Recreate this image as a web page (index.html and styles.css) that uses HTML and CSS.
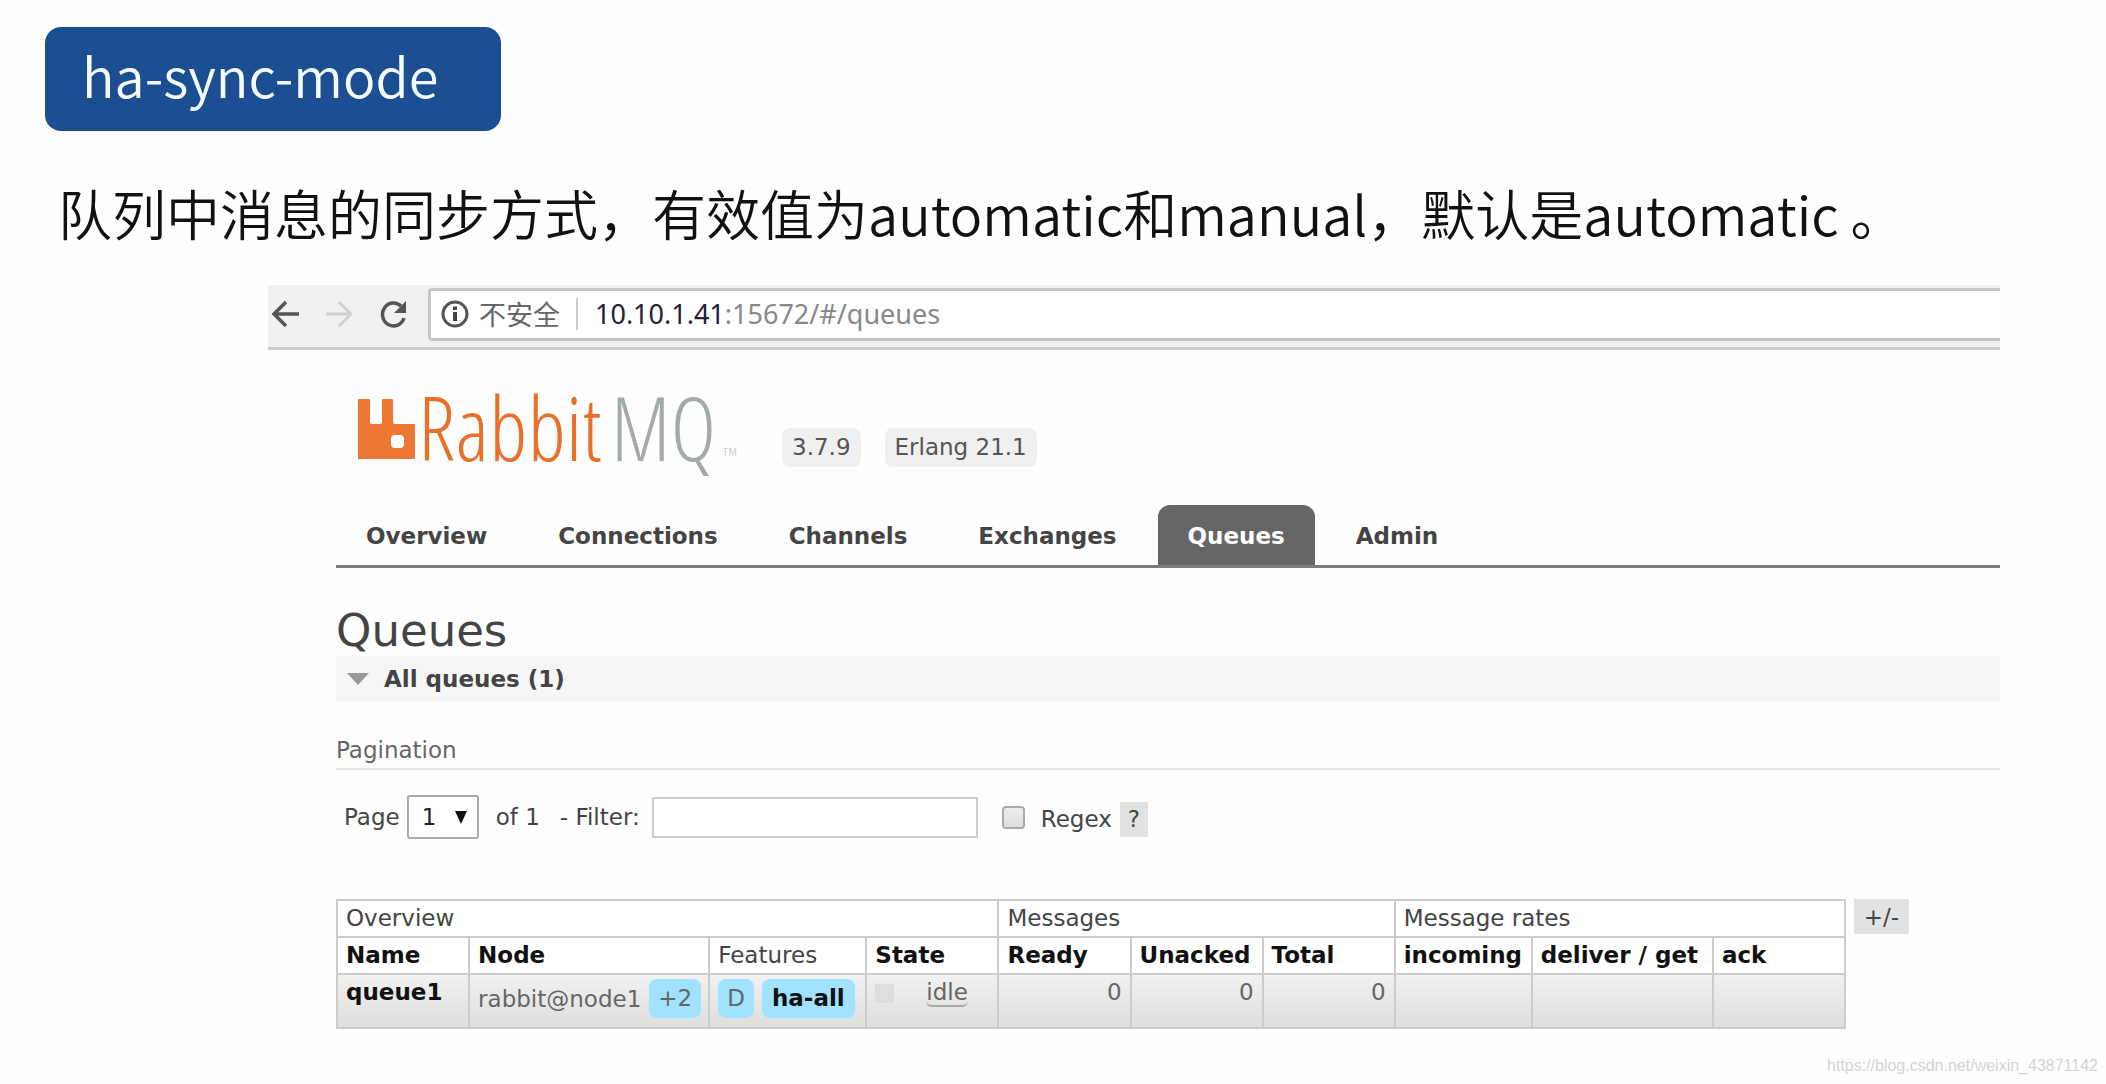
FILE: index.html
```html
<!DOCTYPE html>
<html lang="zh-CN">
<head>
<meta charset="utf-8">
<meta name="viewport" content="width=device-width, initial-scale=1">
<title>ha-sync-mode</title>
<link rel="stylesheet" href="styles.css">
</head>
<body>
<header class="intro">
  <h1 class="badge">ha-sync-mode</h1>
  <p class="lead">队列中消息的同步方式，有效值为automatic和manual，默认是automatic 。</p>
</header>

<div class="browser">
  <div class="toolbar">
    <div class="nav-buttons">
      <button class="nav-button" type="button" aria-label="Back">
        <svg width="28" height="28" viewBox="0 0 28 28" fill="none" stroke="#555" stroke-width="3.500"><path d="M28 14H3M15 2 3 14l12 12"/></svg>
      </button>
      <button class="nav-button" type="button" aria-label="Forward">
        <svg width="28" height="28" viewBox="0 0 28 28" fill="none" stroke="#d0d0d0" stroke-width="3"><path d="M1 14h24M14 2l12 12-12 12"/></svg>
      </button>
      <button class="nav-button" type="button" aria-label="Reload">
        <svg width="28" height="28" viewBox="0 0 28 28"><path d="M22 6A11 11.500 0 1 0 25 18" fill="none" stroke="#555" stroke-width="3.500"/><path d="M27 1v12H15z" fill="#555"/></svg>
      </button>
    </div>
    <div class="address">
      <svg width="28" height="28" viewBox="0 0 28 28"><circle cx="14" cy="14" r="12" fill="none" stroke="#555" stroke-width="3"/><path d="M12 12h4v9h-4zM12 6.500h4v3.500h-4z" fill="#444"/></svg>
      <span class="insecure">不安全</span>
      <span class="url"><b>10.10.1.41</b>:15672/#/queues</span>
    </div>
  </div>

  <main class="page">
    <div class="brand">
      <a class="logo" href="#/" aria-label="RabbitMQ">
        <svg width="58" height="62" viewBox="0 0 58 62"><path fill="#ed7734" fill-rule="evenodd" d="M1 1h11q1 0 1 1v22q0 2 2 2h8q2 0 2-2V2q0-1 1-1h9q1 0 1 1v22q0 2 2 2h19q1 0 1 1v33q0 1-1 1H1zM38 37q-4 0-4 4v5q0 4 4 4h5q4 0 4-4v-5q0-4-4-4z"/></svg>
        <span class="wordmark"><span class="rabbit">Rabbit</span><span class="mq">MQ</span></span>
        <span class="tm">TM</span>
      </a>
      <span class="version">3.7.9</span>
      <span class="version">Erlang 21.1</span>
    </div>

    <nav class="tabs">
      <a class="tab" href="#/">Overview</a>
      <a class="tab" href="#/connections">Connections</a>
      <a class="tab" href="#/channels">Channels</a>
      <a class="tab" href="#/exchanges">Exchanges</a>
      <a class="tab tab-selected" href="#/queues" aria-current="page">Queues</a>
      <a class="tab" href="#/users">Admin</a>
    </nav>

    <h2 class="title">Queues</h2>
    <button class="section" type="button" aria-expanded="true"><span class="caret"></span>All queues (1)</button>
    <h3 class="subtitle">Pagination</h3>

    <form class="filters">
      <label for="page">Page</label>
      <span class="select-box">
        <select id="page"><option>1</option></select>
        <svg class="select-arrow" width="12" height="14" viewBox="0 0 12 14"><path d="M0 1h12L6 14z" fill="#111"/></svg>
      </span>
      <span class="of">of 1</span>
      <label class="filter-label" for="filter">- Filter:</label>
      <input class="filter" id="filter" type="text">
      <input class="tick" id="regex" type="checkbox">
      <label class="regex-label" for="regex">Regex</label>
      <button class="help" type="button">?</button>
    </form>

    <div class="list">
      <table class="queues">
        <colgroup>
          <col class="c-name"><col class="c-node"><col class="c-features"><col class="c-state">
          <col class="c-num"><col class="c-num"><col class="c-num">
          <col class="c-incoming"><col class="c-deliver"><col class="c-num">
        </colgroup>
        <thead>
          <tr><th class="plain" colspan="4">Overview</th><th class="plain" colspan="3">Messages</th><th class="plain" colspan="3">Message rates</th></tr>
          <tr><th>Name</th><th>Node</th><th class="plain">Features</th><th>State</th><th>Ready</th><th>Unacked</th><th>Total</th><th>incoming</th><th>deliver / get</th><th>ack</th></tr>
        </thead>
        <tbody>
          <tr>
            <td><a class="queue-link" href="#/queues/queue1">queue1</a></td>
            <td><div class="tags">rabbit@node1 <span class="tag">+2</span></div></td>
            <td><div class="tags"><span class="tag">D</span><a class="tag tag-policy" href="#/policies/ha-all">ha-all</a></div></td>
            <td><div class="state"><span class="dot"></span><span class="idle">idle</span></div></td>
            <td class="num">0</td><td class="num">0</td><td class="num">0</td>
            <td></td><td></td><td></td>
          </tr>
        </tbody>
      </table>
      <button class="columns" type="button">+/-</button>
    </div>
  </main>
</div>

<footer class="watermark">https://blog.csdn.net/weixin_43871142</footer>
</body>
</html>
```
FILE: styles.css
```css
* { box-sizing: border-box; }

body {
  margin: 0;
  background: #fefefe;
  color: #444;
  font: 23px/26px "DejaVu Sans", Verdana, sans-serif;
}

button, input, select { font: inherit; color: inherit; margin: 0; }
button { border: 0; padding: 0; background: none; }
a { color: inherit; text-decoration: none; }
svg { display: block; flex: none; }
h1, h2, h3, p { margin: 0; font-weight: normal; }

/* Slide heading */
.intro {
  padding: 27px 45px 0;
  font-family: "Noto Sans CJK SC", sans-serif;
}
.badge {
  width: 456px;
  height: 104px;
  padding-left: 37px;
  border-radius: 16px;
  background: #1b4f91;
  color: #f4fbff;
  font-size: 54px;
  font-weight: 350;
  line-height: 96px;
}
.lead {
  margin-top: 42px;
  padding-left: 13px;
  color: #111;
  font-size: 54px;
  font-weight: 350;
  line-height: 80px;
}

/* Browser window */
.browser { margin: 32px 106px 0 268px; }
.toolbar {
  display: flex;
  height: 65px;
  border-bottom: 3px solid #ccc;
  background: #f1f1f1;
}
.nav-buttons {
  display: flex;
  align-items: center;
  gap: 26px;
  width: 160px;
  padding: 0 0 4px 3px;
}
.nav-button { width: 28px; height: 28px; }
.address {
  display: flex;
  flex: 1;
  align-items: center;
  height: 53px;
  margin-top: 3px;
  padding: 0 0 2px 10px;
  border: 3px solid #c6c6c6;
  border-right: 0;
  border-radius: 4px 0 0 4px;
  background: #fff;
  color: #888;
  font: 27px/32px "Noto Sans", "Noto Sans CJK SC", sans-serif;
}
.insecure {
  margin-left: 10px;
  padding-right: 16px;
  border-right: 2px solid #ccc;
  color: #666;
  font-family: "Noto Sans CJK SC", sans-serif;
}
.url { margin-left: 17px; }
.url b { color: #223; font-weight: normal; }

/* Management page */
.page { padding: 40px 0 0 68px; }
.brand { display: flex; align-items: flex-end; height: 77px; }
.logo {
  display: flex;
  align-items: flex-end;
  width: 422px;
  height: 62px;
  margin-bottom: 7px;
  padding-left: 21px;
}
.wordmark {
  padding: 0 6px 2px 3px;
  font: 300 88px/62px "Open Sans Condensed Light", "Open Sans Condensed", sans-serif;
}
.rabbit { margin-right: 9px; color: #e8702a; }
.mq { color: #a3abaa; }
.tm { color: #ccc; font: 10px/14px "Liberation Sans", sans-serif; }
.version {
  height: 39px;
  margin-left: 24px;
  padding: 0 10px;
  border-radius: 8px;
  background: #f0f0f0;
  color: #555;
  line-height: 39px;
}

.tabs {
  display: flex;
  gap: 11px;
  margin-top: 38px;
  border-bottom: 3px solid #7c7c7c;
}
.tab {
  height: 60px;
  padding: 0 30px;
  border-radius: 12px 12px 0 0;
  font-weight: bold;
  line-height: 62px;
}
.tab-selected { background: #666; color: #fff; }

.title { margin-top: 38px; font-size: 45px; line-height: 50px; }
.section {
  display: flex;
  align-items: center;
  gap: 15px;
  width: 100%;
  height: 46px;
  padding-left: 11px;
  background: #f6f6f6;
  font-weight: bold;
}
.caret {
  border: solid transparent;
  border-width: 12px 11px 0;
  border-top-color: #999;
}
.subtitle {
  margin-top: 31px;
  padding: 4px 0 5px;
  border-bottom: 2px solid #e6e6e6;
  color: #666;
  font-size: 23px;
}

.filters {
  display: flex;
  align-items: center;
  margin-top: 25px;
  padding-left: 8px;
}
.select-box { position: relative; margin-left: 7px; }
.select-box select {
  display: block;
  width: 72px;
  height: 44px;
  padding: 0 0 0 13px;
  border: 2px solid #aaa;
  border-radius: 3px;
  background: #fff;
  color: #222;
  appearance: none;
}
.select-arrow { position: absolute; top: 15px; right: 12px; pointer-events: none; }
.of { margin-left: 17px; }
.filter-label { margin-left: 20px; }
.filter {
  width: 326px;
  height: 41px;
  margin-left: 12px;
  border: 2px solid #ccc;
  background: #fff;
}
.tick {
  width: 23px;
  height: 23px;
  margin-left: 24px;
  border: 2px solid #aaa;
  border-radius: 4px;
  background: linear-gradient(#eee, #ddd);
  appearance: none;
}
.tick:checked { background: #666; }
.regex-label { margin: 4px 0 0 16px; }
.help {
  width: 28px;
  height: 35px;
  margin: 4px 0 0 8px;
  background: #e2e2e2;
}

/* Queue table */
.list { display: flex; align-items: flex-start; gap: 8px; margin-top: 60px; }
.queues {
  width: 1510px;
  border: 2px solid #ccc;
  border-collapse: collapse;
  table-layout: fixed;
}
.c-name { width: 132px; }
.c-node { width: 240px; }
.c-features { width: 157px; }
.c-state { width: 132px; }
.c-num { width: 132px; }
.c-incoming { width: 137px; }
.c-deliver { width: 181px; }
.queues th, .queues td {
  padding: 4px 8px;
  border: 2px solid #ccc;
  text-align: left;
  vertical-align: top;
  white-space: nowrap;
}
.queues th {
  height: 37px;
  background: #fff;
  color: #111;
}
.queues th.plain { color: #444; font-weight: normal; }
.queues td {
  height: 54px;
  background: linear-gradient(#f1f1f1, #dedede);
  color: #666;
}
.queues td.num { text-align: right; }
.queue-link { color: #111; font-weight: bold; }
.tags { display: flex; align-items: center; gap: 8px; height: 39px; }
.tag {
  height: 39px;
  padding: 0 9px;
  border-radius: 8px;
  background: #a0e2ff;
  line-height: 39px;
}
.tag-policy { padding: 0 10px; color: #111; font-weight: bold; }
.state { display: flex; align-items: center; gap: 32px; }
.dot { width: 19px; height: 19px; background: #ddd; }
.idle { border-bottom: 2px solid #aaa; border-radius: 0 0 6px 6px; }
.columns {
  width: 55px;
  height: 35px;
  background: #e2e2e2;
}

.watermark {
  padding: 25px 8px 5px;
  color: #d4d4d4;
  font: 16px/24px "Liberation Sans", sans-serif;
  text-align: right;
}
```
